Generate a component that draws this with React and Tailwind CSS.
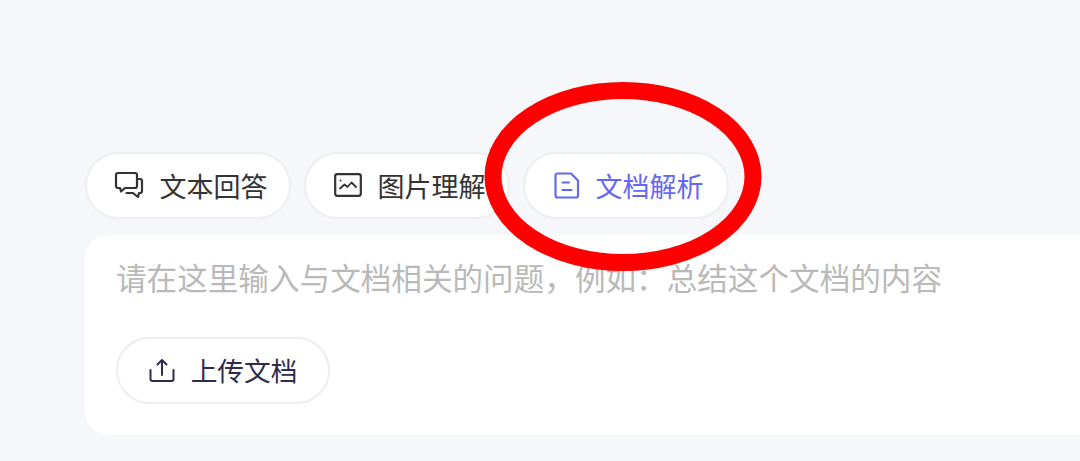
function Pill({ icon, label, className = "text-[#333333]" }) {
  return (
    <div className={`flex h-[67px] w-[206px] shrink-0 items-center justify-center gap-[16px] rounded-full border-2 border-[#eeeef0] bg-white pb-[1px] pl-[5px] text-[27px] leading-none ${className}`}>
      {icon}
      <span>{label}</span>
    </div>
  );
}

const ChatIcon = (
  <svg width="30" height="28" viewBox="0 0 30 28" fill="none" stroke="#333333" strokeWidth="2.2" strokeLinejoin="round" strokeLinecap="round">
    <path d="M4 2h17a2 2 0 0 1 2 2v11a2 2 0 0 1-2 2H11l-4 3.5-1-3.5H4a2 2 0 0 1-2-2V4a2 2 0 0 1 2-2z" />
    <path d="M23 8h3a2 2 0 0 1 2 2v10a2 2 0 0 1-2 2h-1l-1 4-5-4h-6.500" />
  </svg>
);

const ImageIcon = (
  <svg width="28" height="24" viewBox="0 0 28 24" fill="none" stroke="#333333" strokeWidth="2.2" strokeLinejoin="round" strokeLinecap="round">
    <rect x="1.200" y="1.200" width="25.600" height="21.600" rx="2" />
    <path d="M6 15.500l4.500-4 3 2.500 4-4.500 4.500 4.500" strokeWidth="1.800" />
    <circle cx="6.500" cy="7.500" r="1" fill="#333333" stroke="none" />
  </svg>
);

const DocIcon = (
  <svg width="26" height="27" viewBox="0 0 26 27" fill="none" stroke="#6467f2" strokeWidth="2.200" strokeLinejoin="round" strokeLinecap="round">
    <path d="M3.500 1.500H17l7 7v15a2 2 0 0 1-2 2H3.500a2 2 0 0 1-2-2v-20a2 2 0 0 1 2-2z" />
    <path d="M8.500 10.500h6.500M8.500 18h9" />
  </svg>
);

const UploadIcon = (
  <svg width="26" height="24" viewBox="0 0 26 24" fill="none" stroke="#2f2b4f" strokeWidth="2" strokeLinejoin="round" strokeLinecap="round">
    <path d="M13 17V2M8.500 6.500 13 2l4.500 4.500" />
    <path d="M1.500 12v9a2 2 0 0 0 2 2h19a2 2 0 0 0 2-2v-9" />
  </svg>
);

export default function App() {
  return (
    <div
      className="relative h-[461px] w-[1080px] overflow-hidden bg-[#f6f7fb] pl-[85px] pt-[152px]"
      style={{ fontFamily: '"Noto Sans CJK SC", "Noto Sans", sans-serif' }}
    >
      <div className="flex gap-[13px]">
        <Pill icon={ChatIcon} label="文本回答" />
        <Pill icon={ImageIcon} label="图片理解" />
        <Pill icon={DocIcon} label="文档解析" className="text-[#6467f2]" />
      </div>
      <div className="mt-[16px] h-[200px] w-[1100px] rounded-[24px] bg-white pl-[31px] pt-[22px]">
        <div className="text-[30.600px] leading-[40px] text-[#b9b9b9]">
          请在这里输入与文档相关的问题，例如：总结这个文档的内容
        </div>
        <div className="mt-[40px] flex h-[67px] w-[214px] items-center justify-center gap-[16px] rounded-full border-2 border-[#eeeef0] bg-white pb-[1px] text-[26.700px] leading-none text-[#2f2b4f]">
          {UploadIcon}
          <span>上传文档</span>
        </div>
      </div>
      <svg className="absolute left-[480px] top-[76px]" width="290" height="200" viewBox="0 0 290 200" fill="none">
        <ellipse cx="143" cy="100.500" rx="130" ry="86" stroke="#fe0000" strokeWidth="17" />
      </svg>
    </div>
  );
}
